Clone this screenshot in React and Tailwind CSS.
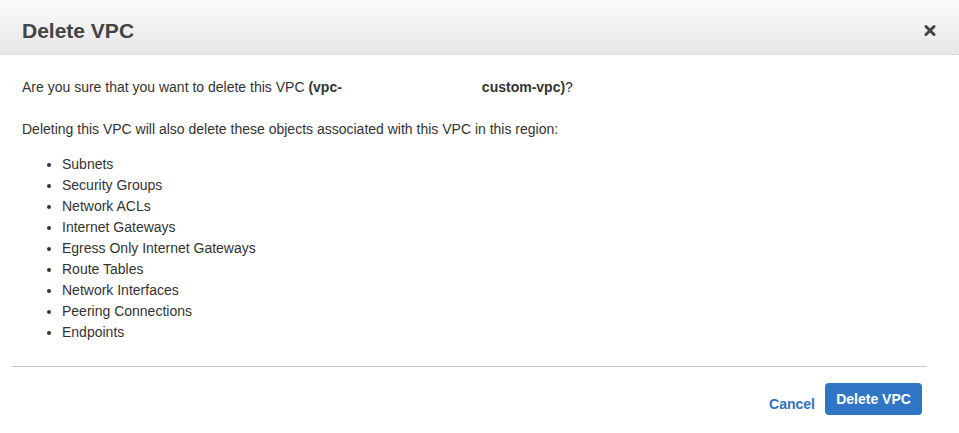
import React from "react";

const items = [
  "Subnets",
  "Security Groups",
  "Network ACLs",
  "Internet Gateways",
  "Egress Only Internet Gateways",
  "Route Tables",
  "Network Interfaces",
  "Peering Connections",
  "Endpoints",
];

export default function App() {
  return (
    <div
      className="w-[959px] h-[433px] bg-white overflow-hidden text-[#333]"
      style={{ fontFamily: '"Liberation Sans", Arial, Helvetica, sans-serif' }}
    >
      <div className="h-[55px] bg-gradient-to-b from-[#fafafa] via-[#f1f1f1] to-[#e6e6e6] border-b border-dotted border-[#c8c8c8] flex items-center justify-between pl-[22px] pr-[23px]">
        <h1 className="text-[21px] font-bold text-[#444] leading-none pt-[6px]">Delete VPC</h1>
        <svg width="12" height="13" viewBox="0 0 12 12" className="mt-[6px]">
          <path d="M2 2 L10 10 M10 2 L2 10" stroke="#444" strokeWidth="3" strokeLinecap="round" />
        </svg>
      </div>
      <div className="pl-[22px] pt-[22px] text-[14px] leading-[21px]">
        <p>
          Are you sure that you want to delete this VPC <b>(vpc-</b>
          <span className="inline-block w-[140px]"></span>
          <b>custom-vpc)</b>?
        </p>
        <p className="mt-[21px]">
          Deleting this VPC will also delete these objects associated with this VPC in this region:
        </p>
        <ul className="mt-[14px] pl-[40px] list-disc">
          {items.map((t) => (
            <li key={t} className="leading-[21px]">{t}</li>
          ))}
        </ul>
      </div>
      <div className="mx-[12px] mr-[32px] mt-[23px] border-t-[1.5px] border-[#c4c4c4]"></div>
      <div className="flex items-center justify-end pr-[37px] pt-[16px] gap-[10px]">
        <span className="text-[14px] font-bold text-[#2e73c2] mt-[10px]">Cancel</span>
        <button className="h-[32px] w-[97px] rounded-[4px] bg-[#3076c4] text-white text-[14px] font-bold">
          Delete VPC
        </button>
      </div>
    </div>
  );
}
